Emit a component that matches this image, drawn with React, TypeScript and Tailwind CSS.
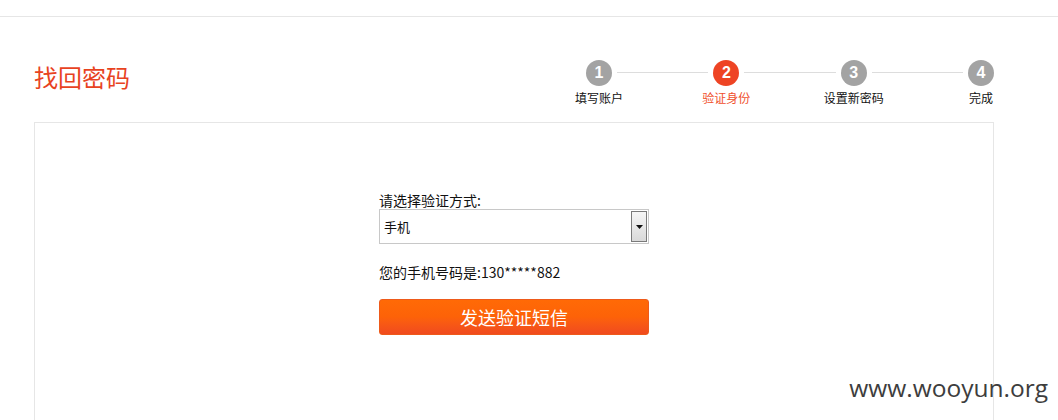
const steps = [
  { num: "1", label: "填写账户", active: false },
  { num: "2", label: "验证身份", active: true },
  { num: "3", label: "设置新密码", active: false },
  { num: "4", label: "完成", active: false },
];

const Step = ({ num, label, active }: { num: string; label: string; active: boolean }) => (
  <div className="flex w-[26px] flex-col items-center">
    <div
      className={`flex h-[26px] w-[26px] items-center justify-center rounded-full font-['Liberation_Sans',sans-serif] text-[16px] font-bold text-white ${
        active ? "bg-[#ee4424]" : "bg-[#a3a3a3]"
      }`}
    >
      {num}
    </div>
    <div
      className={`mt-[4px] whitespace-nowrap text-[12px] leading-[16px] ${
        active ? "text-[#f0502d]" : "text-[#111111]"
      }`}
    >
      {label}
    </div>
  </div>
);

export default function App() {
  return (
    <div className="relative h-[420px] w-[1058px] overflow-hidden bg-white font-['Noto_Sans_CJK_SC',sans-serif] text-[#222222]">
      {/* top bar */}
      <div className="h-[17px] border-b border-[#e6e6e6]" />

      <div className="ml-[34px] w-[960px]">
        {/* header */}
        <div className="mt-[43px] flex h-[62px] items-start justify-between">
          <h1 className="pt-[5px] text-[24px] leading-[24px] text-[#e8431f]">找回密码</h1>
          <div className="flex w-[408px] items-start">
            {steps.map((s, i) => (
              <div key={s.num} className={`flex items-start ${i > 0 ? "flex-1" : ""}`}>
                {i > 0 && <div className="mx-[5px] mt-[12px] h-px flex-1 bg-[#dddddd]" />}
                <Step {...s} />
              </div>
            ))}
          </div>
        </div>

        {/* box */}
        <div className="flex h-[320px] justify-center border border-[#e6e6e6] pt-[68px]">
          <div className="w-[270px]">
            <div className="text-[14px] leading-[18px] text-[#111111]">请选择验证方式:</div>
            <div className="flex h-[35px] items-stretch border border-[#c8c8c8] bg-white p-px">
              <div className="flex flex-1 items-center pl-[3px] text-[13px] text-[#111111]">手机</div>
              <div className="flex w-[16px] items-center justify-center border border-[#7a7a7a] bg-gradient-to-b from-[#f6f6f6] to-[#d9d9d9]">
                <svg width="7" height="4" viewBox="0 0 7 4">
                  <path d="M0 0h7L3.5 4z" fill="#111" />
                </svg>
              </div>
            </div>
            <div className="mt-[19px] text-[14px] leading-[18px] text-[#111111]">
              您的手机号码是:130*****882
            </div>
            <button className="mt-[18px] flex h-[36px] w-full items-center justify-center rounded-[3px] border border-[#ee5a1a] bg-gradient-to-b from-[#ff6a06] via-[#fd6208] to-[#f04a1e] text-[18px] text-white">
              发送验证短信
            </button>
          </div>
        </div>
      </div>

      {/* watermark */}
      <div className="absolute right-[10px] top-[375px] font-['Open_Sans',sans-serif] text-[24.5px] leading-[25px] text-[#3d3d3d]">
        www.wooyun.org
      </div>
    </div>
  );
}
